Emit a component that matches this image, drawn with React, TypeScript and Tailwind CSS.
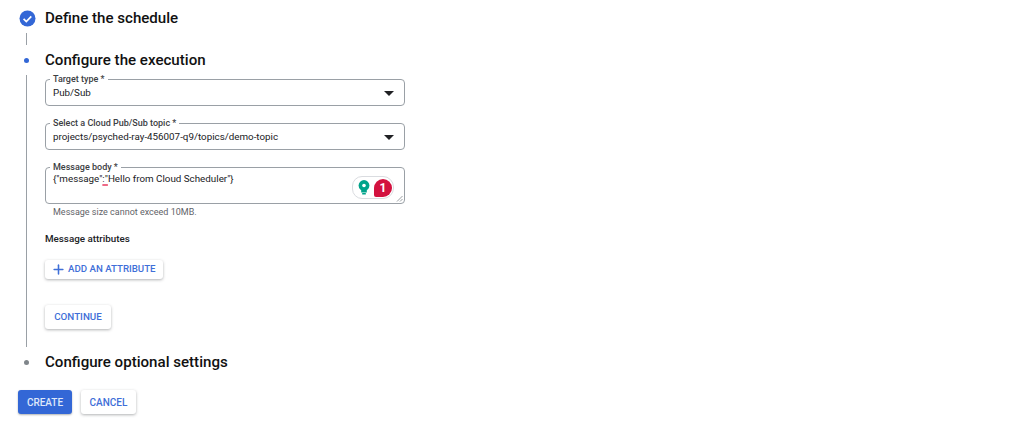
import { Plus } from "lucide-react";
import type { ReactNode } from "react";

function Caret() {
  return (
    <svg width="10" height="5" viewBox="0 0 10 5" className="shrink-0">
      <path d="M0 0h10L5 5z" fill="#202124" />
    </svg>
  );
}

function Field({ label, height, children }: { label: string; height: string; children: ReactNode }) {
  return (
    <div className={`relative w-[360px] rounded-[4px] border border-[#9aa0a6] pl-[7px] pr-[10px] ${height}`}>
      <span className="absolute -top-[6px] left-[4px] bg-white px-[3px] text-[9px] leading-[11px] font-medium text-[#3c4043]">
        {label}
      </span>
      {children}
    </div>
  );
}

export default function App() {
  return (
    <div className="h-[432px] w-[1024px] overflow-hidden bg-white pl-[18px] pt-[8px] font-['Roboto',sans-serif] text-[#202124]">
      {/* Step 1 */}
      <div className="flex h-[20px] items-center">
        <div className="flex w-[27px] pl-[1px]">
          <svg width="17" height="17" viewBox="0 0 17 17">
            <circle cx="8.5" cy="8.5" r="8" fill="#3367d6" />
            <path d="M4.6 8.8l2.7 2.7 5-5.2" fill="none" stroke="#fff" strokeWidth="1.7" />
          </svg>
        </div>
        <h2 className="text-[15.1px] leading-[20px] font-medium text-[#111]">Define the schedule</h2>
      </div>
      <div className="ml-[8px] mt-[5px] h-[12px] w-px bg-[#9aa0a6]" />

      {/* Step 2 */}
      <div className="mt-[5px] flex h-[20px] items-center">
        <div className="w-[27px] pl-[6px]">
          <div className="h-[5px] w-[5px] rounded-full bg-[#3367d6]" />
        </div>
        <h2 className="text-[15.1px] leading-[20px] font-medium text-[#111]">Configure the execution</h2>
      </div>
      <div className="flex">
        <div className="w-[27px] pl-[8px] pt-[5px]">
          <div className="h-[272px] w-px bg-[#9aa0a6]" />
        </div>
        <div className="flex flex-col pt-[9px]">
          <Field label="Target type *" height="h-[27px]">
            <div className="flex h-full items-center justify-between pt-[1px] text-[9.8px]">
              <span>Pub/Sub</span>
              <Caret />
            </div>
          </Field>
          <div className="mt-[17px]">
            <Field label="Select a Cloud Pub/Sub topic *" height="h-[27px]">
              <div className="flex h-full items-center justify-between pt-[1px] text-[9.8px]">
                <span>projects/psyched-ray-456007-q9/topics/demo-topic</span>
                <Caret />
              </div>
            </Field>
          </div>
          <div className="mt-[17px]">
            <Field label="Message body *" height="h-[37px]">
              <p className="pt-[4px] text-[9.8px] leading-[14px]">
                {'{"message"'}
                <span className="underline decoration-[#ee6a86] decoration-[1.5px] underline-offset-2">{':"'}</span>
                {'Hello from Cloud Scheduler"}'}
              </p>
              {/* grammar extension badge */}
              <div className="absolute bottom-[4px] right-[10px] flex h-[23px] w-[42px] items-center rounded-l-[10px] rounded-r-[11px] border border-[#dadce0] bg-white pl-[5px]">
                <svg width="12" height="15" viewBox="0 0 12 15" className="mr-[4px]">
                  <circle cx="6" cy="5.5" r="5.4" fill="#00a38a" />
                  <circle cx="6" cy="5.5" r="1.8" fill="#fff" />
                  <path d="M3.2 10h5.6v2.4H3.2zM4.2 13h3.6v1.6H4.2z" fill="#00a38a" />
                </svg>
                <span className="flex h-[18px] w-[18px] items-center justify-center rounded-[9px] rounded-bl-[2px] bg-[#d3123f] text-[12px] font-bold text-white">
                  1
                </span>
              </div>
              <svg width="7" height="7" viewBox="0 0 7 7" className="absolute bottom-[1px] right-[1px]">
                <path d="M1 6.5L6.5 1M4 6.5L6.5 4" stroke="#80868b" strokeWidth="0.8" />
              </svg>
            </Field>
          </div>
          <p className="mt-[2px] pl-[8px] text-[9px] leading-[12px] text-[#5f6368]">Message size cannot exceed 10MB.</p>
          <h3 className="mt-[15px] text-[9.8px] leading-[12px] font-medium text-[#202124]">Message attributes</h3>
          <button className="mt-[15px] flex h-[19px] w-[118px] items-center rounded-[3px] bg-white pl-[6px] text-[9.7px] font-medium text-[#3f6fd8] shadow-[0_1px_3px_rgba(60,64,67,0.4)]">
            <Plus size={15} strokeWidth={2.5} className="mr-[2px]" />
            ADD AN ATTRIBUTE
          </button>
          <button className="mt-[26px] h-[24px] w-[66px] rounded-[3px] bg-white text-[9.8px] font-medium text-[#3f6fd8] shadow-[0_1px_3px_rgba(60,64,67,0.4)]">
            CONTINUE
          </button>
        </div>
      </div>

      {/* Step 3 */}
      <div className="mt-[5px] flex h-[20px] items-center">
        <div className="w-[27px] pl-[6px]">
          <div className="h-[5px] w-[5px] rounded-full bg-[#80868b]" />
        </div>
        <h2 className="text-[15.1px] leading-[20px] font-medium text-[#111]">Configure optional settings</h2>
      </div>

      <div className="mt-[18px] flex gap-[9px]">
        <button className="h-[24px] w-[54px] rounded-[3px] bg-[#3367d6] text-[10px] font-medium text-[#dfe8fa] shadow-[0_1px_2px_rgba(60,64,67,0.4)]">
          CREATE
        </button>
        <button className="h-[24px] w-[55px] rounded-[3px] bg-white text-[10px] font-medium text-[#3f6fd8] shadow-[0_1px_3px_rgba(60,64,67,0.4)]">
          CANCEL
        </button>
      </div>
    </div>
  );
}
